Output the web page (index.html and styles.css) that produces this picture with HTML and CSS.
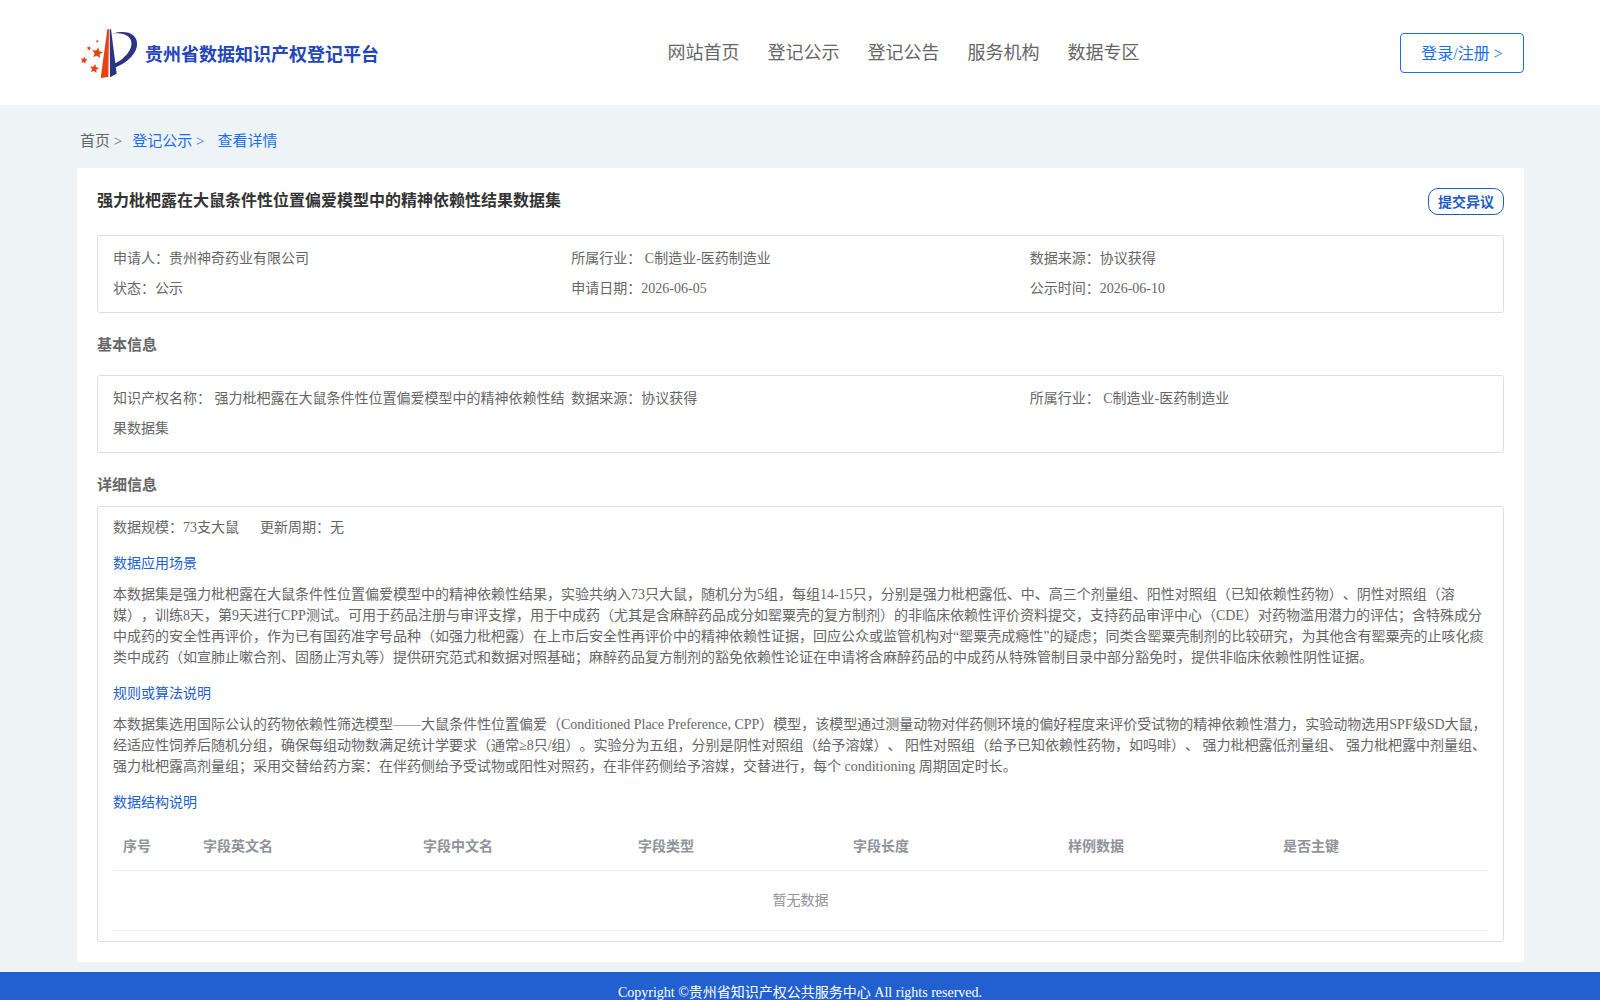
FILE: index.html
```html
<!DOCTYPE html>
<html lang="zh-CN">
<head>
<meta charset="utf-8">
<meta name="viewport" content="width=device-width, initial-scale=1">
<title>贵州省数据知识产权登记平台</title>
<link rel="stylesheet" href="styles.css">
</head>
<body>
<header class="site-header">
  <a class="brand" href="#">
    <svg class="brand-logo" viewBox="60 50 174 156" aria-hidden="true">
      <defs>
        <path id="star" d="M3-16.7L5.8-5.6L16.8-2.4L7 3.8L7.5 15.3L-1.4 7.9L-12.2 11.8L-8 1.1L-15-8L-3.5-7.2z"/>
      </defs>
      <path fill="#e64214" d="M142 57h5l-2 143-23 3z"/>
      <path fill="#2b3384" d="M149 57h4l17 133-20 11z"/>
      <path fill="#2b3384" d="M157 70C178 63 207 63 221 76C237 92 234 118 214 139C199 155 181 165 164 172L162 161C184 151 205 132 212 113C219 92 210 77 190 71C179 68 168 69 157 70z"/>
      <g fill="#e64214">
        <use href="#star" transform="translate(112 128)"/>
        <use href="#star" transform="translate(103 175) scale(.85)"/>
        <use href="#star" transform="translate(72 150) scale(.65)"/>
        <use href="#star" transform="translate(87 114) scale(.42)"/>
        <use href="#star" transform="translate(112 93) scale(.28)"/>
      </g>
    </svg>
    <span class="brand-name">贵州省数据知识产权登记平台</span>
  </a>
  <nav class="main-nav">
    <a href="#">网站首页</a>
    <a href="#">登记公示</a>
    <a href="#">登记公告</a>
    <a href="#">服务机构</a>
    <a href="#">数据专区</a>
  </nav>
  <button class="login" type="button">登录/注册 &gt;</button>
</header>

<main class="page">
  <nav class="crumbs">
    <a class="crumb-home" href="#">首页 &gt;</a>
    <a href="#">登记公示 &gt;</a>
    <a class="crumb-current" href="#">查看详情</a>
  </nav>

  <article class="card">
    <div class="title-row">
      <h1>强力枇杷露在大鼠条件性位置偏爱模型中的精神依赖性结果数据集</h1>
      <button class="object" type="button">提交异议</button>
    </div>

    <div class="box info">
      <div>申请人：贵州神奇药业有限公司</div>
      <div>所属行业： C制造业-医药制造业</div>
      <div>数据来源：协议获得</div>
      <div>状态：公示</div>
      <div>申请日期：2026-06-05</div>
      <div>公示时间：2026-06-10</div>
    </div>

    <h2 class="heading-basic">基本信息</h2>
    <div class="box info">
      <div>知识产权名称： 强力枇杷露在大鼠条件性位置偏爱模型中的精神依赖性结果数据集</div>
      <div>数据来源：协议获得</div>
      <div>所属行业： C制造业-医药制造业</div>
    </div>

    <h2 class="heading-detail">详细信息</h2>
    <div class="box detail">
      <div class="scale"><span>数据规模：73支大鼠</span><span>更新周期：无</span></div>
      <h3>数据应用场景</h3>
      <p>本数据集是强力枇杷露在大鼠条件性位置偏爱模型中的精神依赖性结果，实验共纳入73只大鼠，随机分为5组，每组14-15只，分别是强力枇杷露低、中、高三个剂量组、阳性对照组（已知依赖性药物）、阴性对照组（溶媒），训练8天，第9天进行CPP测试。可用于药品注册与审评支撑，用于中成药（尤其是含麻醉药品成分如罂粟壳的复方制剂）的非临床依赖性评价资料提交，支持药品审评中心（CDE）对药物滥用潜力的评估；含特殊成分中成药的安全性再评价，作为已有国药准字号品种（如强力枇杷露）在上市后安全性再评价中的精神依赖性证据，回应公众或监管机构对“罂粟壳成瘾性”的疑虑；同类含罂粟壳制剂的比较研究，为其他含有罂粟壳的止咳化痰类中成药（如宣肺止嗽合剂、固肠止泻丸等）提供研究范式和数据对照基础；麻醉药品复方制剂的豁免依赖性论证在申请将含麻醉药品的中成药从特殊管制目录中部分豁免时，提供非临床依赖性阴性证据。</p>
      <h3>规则或算法说明</h3>
      <p>本数据集选用国际公认的药物依赖性筛选模型——大鼠条件性位置偏爱（Conditioned Place Preference, CPP）模型，该模型通过测量动物对伴药侧环境的偏好程度来评价受试物的精神依赖性潜力，实验动物选用SPF级SD大鼠，经适应性饲养后随机分组，确保每组动物数满足统计学要求（通常≥8只/组）。实验分为五组，分别是阴性对照组（给予溶媒）、 阳性对照组（给予已知依赖性药物，如吗啡）、 强力枇杷露低剂量组、 强力枇杷露中剂量组、 强力枇杷露高剂量组；采用交替给药方案：在伴药侧给予受试物或阳性对照药，在非伴药侧给予溶媒，交替进行，每个 conditioning 周期固定时长。</p>
      <h3>数据结构说明</h3>
      <table>
        <colgroup><col class="col-index"><col class="col-name"><col><col><col><col><col></colgroup>
        <thead>
          <tr><th>序号</th><th>字段英文名</th><th>字段中文名</th><th>字段类型</th><th>字段长度</th><th>样例数据</th><th>是否主键</th></tr>
        </thead>
        <tbody>
          <tr><td colspan="7">暂无数据</td></tr>
        </tbody>
      </table>
    </div>
  </article>
</main>

<footer class="site-footer">Copyright ©贵州省知识产权公共服务中心 All rights reserved.</footer>
</body>
</html>
```
FILE: styles.css
```css
* {
  box-sizing: border-box;
}

body {
  margin: 0;
  background: #eef3f6;
  color: #666;
  font: 14px/21px "Liberation Serif", "Noto Sans CJK SC", serif;
  text-spacing-trim: space-all;
}

h1, h2, h3, p {
  margin: 0;
}

a {
  color: inherit;
  text-decoration: none;
}

button {
  background: #fff;
  font-family: inherit;
  cursor: pointer;
}

.site-header {
  display: flex;
  justify-content: space-between;
  align-items: center;
  height: 105px;
  padding: 0 76px 0 80px;
  background: #fff;
}

.brand {
  display: flex;
  align-items: center;
  gap: 7px;
}

.brand-logo {
  width: 58px;
  height: 52px;
}

.brand-name {
  padding-top: 5px;
  color: #2446b8;
  font-size: 18px;
  font-weight: bold;
  line-height: 24px;
}

.main-nav {
  display: flex;
  font-size: 18px;
  line-height: 24px;
}

.main-nav a {
  margin-left: 28px;
}

.login {
  min-width: 124px;
  height: 40px;
  padding: 0 20px 2px;
  border: 1px solid #1a6fe8;
  border-radius: 4px;
  color: #1a6fe8;
  font-size: 16px;
}

.page {
  padding: 21px 76px 10px 77px;
}

.crumbs {
  display: flex;
  gap: 10px;
  padding: 0 3px;
  color: #1a6ff0;
  font-size: 15px;
  line-height: 30px;
}

.crumb-home {
  color: #666;
}

.crumb-current {
  padding-left: 3px;
}

.card {
  margin-top: 12px;
  padding: 20px;
  background: #fff;
}

.title-row {
  display: flex;
  justify-content: space-between;
  align-items: flex-start;
  height: 47px;
}

h1 {
  color: #333;
  font-size: 16px;
  line-height: 26px;
}

.object {
  height: 27px;
  padding: 0 9px 2px;
  border: 1px solid #1f5cc8;
  border-radius: 10px;
  color: #1f5cc8;
  font-size: 14px;
  font-weight: bold;
}

.box {
  border: 1px solid #dcdfe0;
  border-radius: 3px;
}

.info {
  display: grid;
  grid-template-columns: repeat(3, 1fr);
  padding: 8px 15px;
  line-height: 30px;
}

h2 {
  font-size: 15px;
  line-height: 22px;
}

.heading-basic {
  padding: 21px 0 19px;
}

.heading-detail {
  padding: 21px 0 10px;
}

.detail {
  padding: 10px 15px;
}

.scale {
  display: flex;
  gap: 21px;
}

h3 {
  padding: 15px 0 10px;
  color: #2260d0;
  font-size: 14px;
  font-weight: normal;
  line-height: 21px;
}

table {
  width: 100%;
  border-collapse: collapse;
  table-layout: fixed;
  color: #909399;
}

.col-index {
  width: 80px;
}

.col-name {
  width: 16%;
}

th {
  height: 47px;
  padding: 0 10px;
  border-bottom: 1px solid #ebeef5;
  text-align: left;
}

td {
  height: 60px;
  padding: 0;
  border-bottom: 1px solid #ebeef5;
  text-align: center;
}

.site-footer {
  padding: 10px;
  background: #2260d0;
  color: #fff;
  line-height: 22px;
  text-align: center;
}
```
